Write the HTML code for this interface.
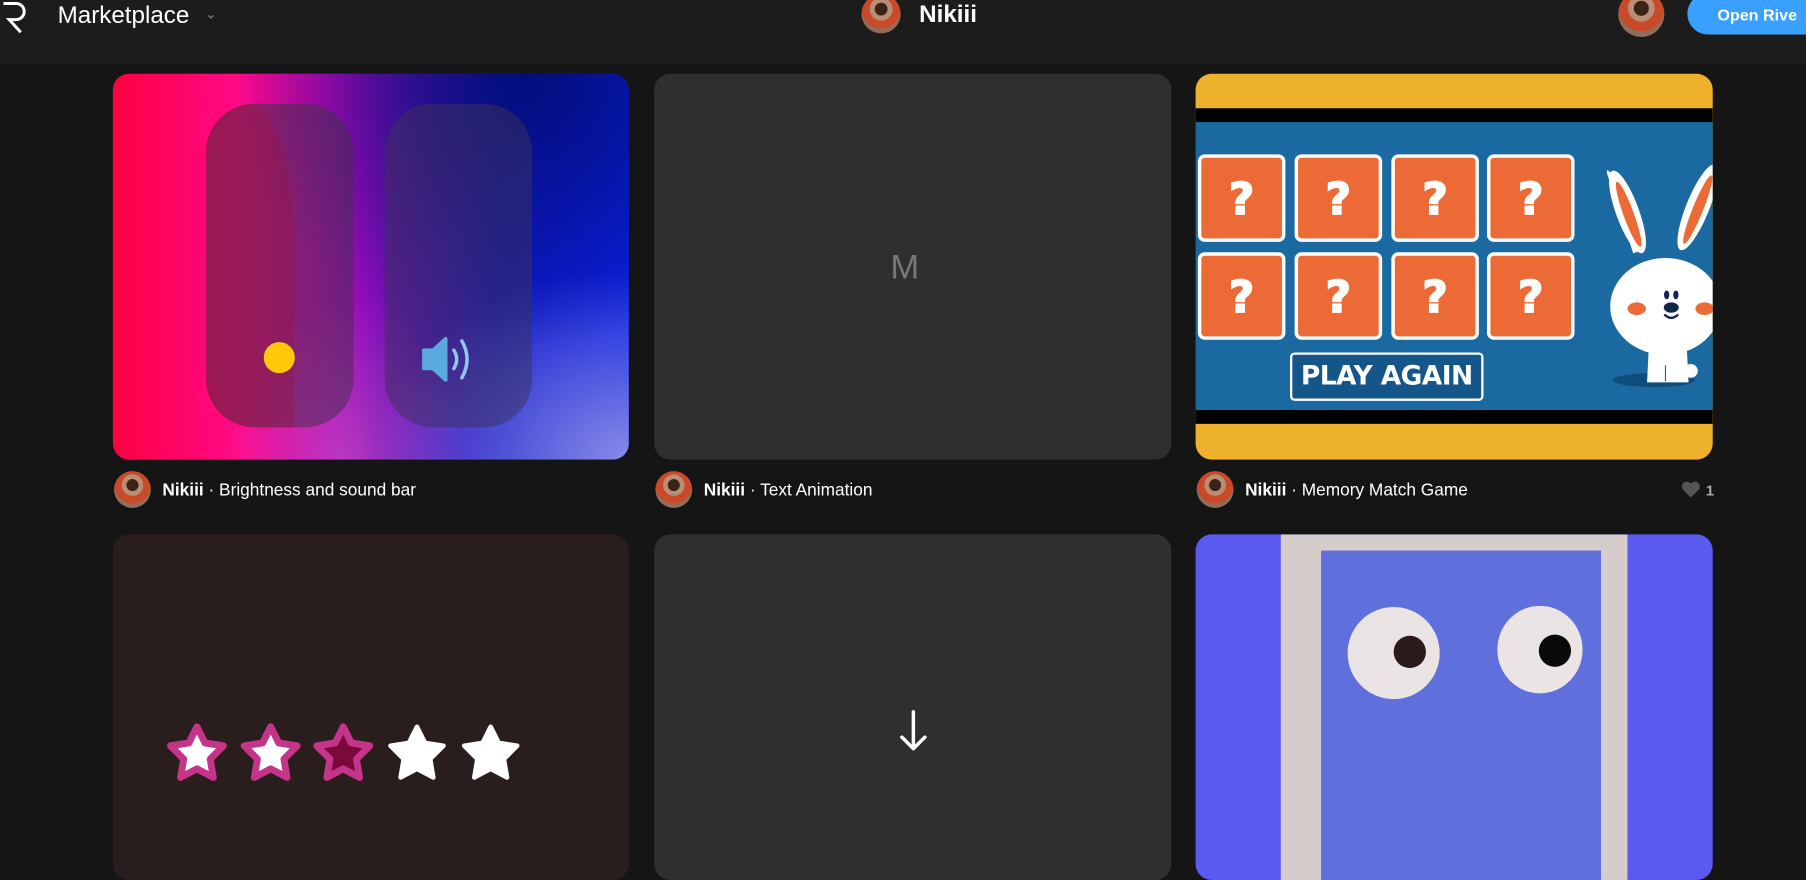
<!DOCTYPE html>
<html><head><meta charset="utf-8"><style>
html,body{margin:0;padding:0;width:1806px;height:818px;overflow:hidden;background:#151515;font-family:"Liberation Sans",sans-serif}
#w{position:absolute;left:0;top:0;width:1568px;height:710px;transform:scale(1.15179);transform-origin:0 0}
.a{position:absolute}
.card{position:absolute;border-radius:14px;overflow:hidden}
.av{position:absolute;border-radius:50%;background:radial-gradient(circle at 50% 38%,#3a2418 0 20%,#b98e74 21% 36%,#c84a28 37% 62%,#8f6e5e 63%)}
.ft{position:absolute;color:#fff;font-size:15px;white-space:nowrap}
.ft b{font-weight:700}
.tile{position:absolute;width:70px;height:70px;background:#ec6a35;border:3px solid #fff;border-radius:6px;color:#fff;font-weight:900;font-size:38px;text-align:center;line-height:72px;font-family:"DejaVu Sans",sans-serif;-webkit-text-stroke:1.5px #fff}
</style></head><body><div id="w">
<div class="a" style="left:0;top:0;width:1568px;height:55px;background:#1c1c1c"></div>
<svg class="a" style="left:0;top:0" width="30" height="30"><path d="M3 3 H14 a7 7 0 0 1 0 14 H8 L18 28" fill="none" stroke="#fff" stroke-width="2.6"/></svg>
<div class="a" style="left:50px;top:2px;color:#fff;font-size:21px">Marketplace</div>
<div class="a" style="left:178px;top:5px;color:#888;font-size:12px">⌄</div>
<div class="av" style="left:748px;top:-5px;width:34px;height:34px"></div>
<div class="a" style="left:798px;top:1px;color:#fff;font-size:21px;font-weight:700">Nikiii</div>
<div class="av" style="left:1405px;top:-8px;width:40px;height:40px"></div>
<div class="a" style="left:1465px;top:-6px;width:120px;height:36px;border-radius:18px;background:#3aa0ff"></div>
<div class="a" style="left:1491px;top:5px;color:#fff;font-size:14px;font-weight:700">Open Rive</div>

<div class="card" style="left:98px;top:64px;width:448px;height:335px;background:linear-gradient(90deg,#ff0040 0%,#ff0a8a 25%,#b60ab8 42%,#6a10b8 55%,#1018c8 75%,#0a20e0 100%)">
  <div class="a" style="left:0;top:0;width:448px;height:335px;background:radial-gradient(ellipse at 80% 0%,rgba(0,10,100,.8),transparent 50%),radial-gradient(ellipse at 100% 100%,rgba(150,150,230,.9),transparent 35%),radial-gradient(ellipse at 45% 100%,rgba(200,100,200,.5),transparent 30%)"></div>
  <div class="a" style="left:81px;top:26px;width:128px;height:281px;border-radius:42px;background:rgba(60,50,70,.5);overflow:hidden"><div class="a" style="left:0;top:0;width:76px;height:281px;background:rgba(150,20,60,.35);border-top-right-radius:40px 120px"></div></div>
  <div class="a" style="left:236px;top:26px;width:128px;height:281px;border-radius:42px;background:rgba(60,50,90,.5)"></div>
  <div class="a" style="left:131px;top:233px;width:27px;height:27px;border-radius:50%;background:#ffc90a"></div>
  <svg class="a" style="left:268px;top:226px" width="60" height="46"><path d="M2 14 H10 L21 4 V40 L10 30 H2 Z" fill="#5aaae0" stroke="#5aaae0" stroke-width="3" stroke-linejoin="round"/><path d="M28 14 Q33 22 28 30" fill="none" stroke="#8fc8ef" stroke-width="3" stroke-linecap="round"/><path d="M35 6 Q44 22 35 38" fill="none" stroke="#8fc8ef" stroke-width="3" stroke-linecap="round"/></svg>
</div>
<div class="av" style="left:99px;top:409px;width:32px;height:32px"></div>
<div class="ft" style="left:141px;top:417px"><b>Nikiii</b> · Brightness and sound bar</div>

<div class="card" style="left:568px;top:64px;width:449px;height:335px;background:#2f2f2f"><div class="a" style="left:205px;top:152px;color:#777;font-size:30px">M</div></div>
<div class="av" style="left:569px;top:409px;width:32px;height:32px"></div>
<div class="ft" style="left:611px;top:417px"><b>Nikiii</b> · Text Animation</div>

<div class="card" style="left:1038px;top:64px;width:449px;height:335px;background:#edb12c">
  <div class="a" style="left:0;top:30px;width:449px;height:274px;background:#000"></div>
  <div class="a" style="left:0;top:42px;width:449px;height:250px;background:#1a69a0"></div>
  <div class="tile" style="left:2px;top:70px">?</div><div class="tile" style="left:86px;top:70px">?</div><div class="tile" style="left:170px;top:70px">?</div><div class="tile" style="left:253px;top:70px">?</div>
  <div class="tile" style="left:2px;top:155px">?</div><div class="tile" style="left:86px;top:155px">?</div><div class="tile" style="left:170px;top:155px">?</div><div class="tile" style="left:253px;top:155px">?</div>
  <div class="a" style="left:82px;top:242px;width:164px;height:38px;border:2px solid #fff;border-radius:4px;background:#14568a;color:#fff;font-weight:900;font-size:23px;text-align:center;line-height:38px;font-family:'DejaVu Sans',sans-serif;letter-spacing:-0.5px">PLAY AGAIN</div>
  <svg class="a" style="left:350px;top:78px" width="99" height="200">
    <ellipse cx="48" cy="188" rx="36" ry="6" fill="#0f4d7c"/>
    <path d="M12 10 Q4 0 9 14 L30 78 L40 74 Z" fill="#fff"/>
    <ellipse cx="25" cy="42" rx="10" ry="38" transform="rotate(-20 25 42)" fill="#fff"/><ellipse cx="26" cy="44" rx="4.5" ry="30" transform="rotate(-20 26 44)" fill="#ec6a35"/>
    <ellipse cx="86" cy="38" rx="10" ry="40" transform="rotate(22 86 38)" fill="#fff"/><ellipse cx="86" cy="40" rx="4.5" ry="32" transform="rotate(22 86 40)" fill="#ec6a35"/>
    <path d="M44 150 L42 190 H78 L76 150 Z" fill="#fff"/><circle cx="80" cy="180" r="6" fill="#fff"/>
    <path d="M58 175 V189" stroke="#1a69a0" stroke-width="1"/>
    <ellipse cx="58" cy="124" rx="48" ry="42" fill="#fff"/>
    <ellipse cx="33" cy="126" rx="8" ry="5.5" fill="#ec6a35"/><ellipse cx="92" cy="126" rx="8" ry="5.5" fill="#ec6a35"/>
    <ellipse cx="59" cy="114" rx="2.3" ry="3.8" fill="#12264a"/><ellipse cx="67" cy="114" rx="2.3" ry="3.8" fill="#12264a"/>
    <ellipse cx="63" cy="125" rx="6.5" ry="4.5" fill="#12264a"/><path d="M57 131 Q63 137 69 131" fill="none" stroke="#12264a" stroke-width="2"/>
  </svg>
</div>
<div class="av" style="left:1039px;top:409px;width:32px;height:32px"></div>
<div class="ft" style="left:1081px;top:417px"><b>Nikiii</b> · Memory Match Game</div>
<svg class="a" style="left:1459px;top:417px" width="18" height="16"><path d="M9 15 L2 8 A4 4 0 0 1 9 3 A4 4 0 0 1 16 8 Z" fill="#555"/></svg>
<div class="a" style="left:1481px;top:418px;color:#aaa;font-size:13px;font-weight:700">1</div>

<div class="card" style="left:98px;top:464px;width:448px;height:300px;background:#2a1d1d">
  <svg class="a" style="left:40px;top:155px" width="320" height="70">
    <defs><path id="s" d="M0 -24 L7 -10 L23 -7.5 L11.5 4 L14.2 20 L0 12.5 L-14.2 20 L-11.5 4 L-23 -7.5 L-7 -10 Z"/></defs>
    <use href="#s" x="33" y="36" fill="#fff" stroke="#c4358a" stroke-width="6" stroke-linejoin="round"/>
    <use href="#s" x="97" y="36" fill="#fff" stroke="#c4358a" stroke-width="6" stroke-linejoin="round"/>
    <use href="#s" x="160" y="36" fill="#7a0a3a" stroke="#c4358a" stroke-width="6" stroke-linejoin="round"/>
    <use href="#s" x="224" y="36" fill="#fff" stroke="#fff" stroke-width="4" stroke-linejoin="round"/>
    <use href="#s" x="288" y="36" fill="#fff" stroke="#fff" stroke-width="4" stroke-linejoin="round"/>
  </svg>
</div>
<div class="card" style="left:568px;top:464px;width:449px;height:300px;background:#2f2f2f">
  <svg class="a" style="left:212px;top:152px" width="26" height="38"><path d="M13 2 V34 M3 24 L13 34 L23 24" fill="none" stroke="#fff" stroke-width="3" stroke-linecap="round" stroke-linejoin="round"/></svg>
</div>
<div class="card" style="left:1038px;top:464px;width:449px;height:300px;background:#5a5af0">
  <div class="a" style="left:74px;top:0;width:301px;height:300px;background:#d5cccc"></div>
  <div class="a" style="left:109px;top:14px;width:243px;height:286px;background:#5f6fdc"></div>
  <div class="a" style="left:132px;top:63px;width:80px;height:80px;border-radius:50%;background:#ebe4e4"></div>
  <div class="a" style="left:172px;top:88px;width:28px;height:28px;border-radius:50%;background:#2a1a1a"></div>
  <div class="a" style="left:262px;top:62px;width:74px;height:76px;border-radius:50%;background:#ebe4e4"></div>
  <div class="a" style="left:298px;top:87px;width:28px;height:28px;border-radius:50%;background:#0a0a0a"></div>
</div>
</div></body></html>
